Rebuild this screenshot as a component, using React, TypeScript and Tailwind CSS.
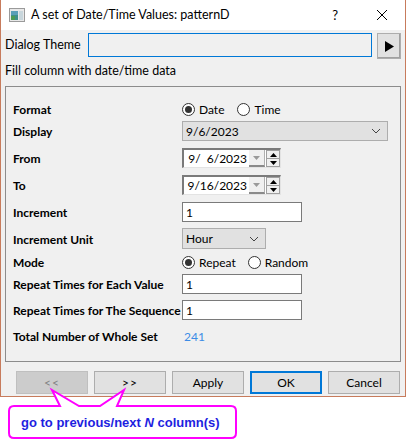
import React from "react";

function Radio({ checked, label, className = "" }: { checked?: boolean; label: string; className?: string }) {
  return (
    <div className={`flex items-center ${className}`}>
      <div className="w-[13px] h-[13px] rounded-full border border-[#333] bg-white flex items-center justify-center">
        {checked && <div className="w-[7px] h-[7px] rounded-full bg-[#333]" />}
      </div>
      <span className="ml-[4px] pt-[1px]">{label}</span>
    </div>
  );
}

function Chevron() {
  return (
    <svg width="10" height="6" viewBox="0 0 10 6" className="shrink-0">
      <polyline points="1,1 5,5 9,1" fill="none" stroke="#444" strokeWidth="1" />
    </svg>
  );
}

function Combo({ value, width }: { value: string; width: string }) {
  return (
    <div className={`${width} h-full bg-[#e1e1e1] border border-[#adadad] flex items-center pl-[3px] pr-[6px] justify-between`}>
      <span className="pt-[1px]">{value}</span>
      <Chevron />
    </div>
  );
}

function TextBox({ value }: { value: string }) {
  return (
    <div className="w-[120px] h-full bg-white border border-[#7a7a7a] flex items-center pl-[3px]">
      <span className="pt-[1px]">{value}</span>
    </div>
  );
}

function DatePicker({ value }: { value: string }) {
  return (
    <div className="w-[99px] h-full flex border-t-[2px] border-l-[2px] border-t-[#7a7a7a] border-l-[#7a7a7a] border-b border-r border-b-[#e3e3e3] border-r-[#e3e3e3] bg-white">
      <div className="flex-1 flex items-center justify-end pr-[2px] pt-[1px] whitespace-pre">{value}</div>
      <div className="w-[16px] h-full bg-[#f0f0f0] border-b-[2px] border-r border-b-[#8a8a8a] border-r-[#b0b0b0] flex items-center justify-center">
        <svg width="7" height="4" viewBox="0 0 7 4">
          <polygon points="0,0 7,0 3.5,4" fill="#9a9a9a" />
        </svg>
      </div>
      <div className="w-[14px] h-full ml-[1px] flex flex-col border border-[#a0a0a0] bg-[#f0f0f0]">
        <div className="flex-1 flex items-center justify-center border-b border-[#a0a0a0]">
          <svg width="7" height="4" viewBox="0 0 7 4">
            <polygon points="0,4 7,4 3.5,0" fill="#000" />
          </svg>
        </div>
        <div className="flex-1 flex items-center justify-center">
          <svg width="7" height="4" viewBox="0 0 7 4">
            <polygon points="0,0 7,0 3.5,4" fill="#000" />
          </svg>
        </div>
      </div>
    </div>
  );
}

function Row({ label, children, h, mt }: { label: string; children?: React.ReactNode; h: string; mt: string }) {
  return (
    <div className={`flex items-center ${h} ${mt}`}>
      <div className="w-[169px] font-bold shrink-0 whitespace-nowrap pt-[2px]">{label}</div>
      <div className="flex-1 h-full flex items-center">{children}</div>
    </div>
  );
}

function Btn({ children, variant = "normal" }: { children: React.ReactNode; variant?: "normal" | "disabled" | "default" }) {
  const cls =
    variant === "disabled"
      ? "bg-[#cccccc] border border-[#bfbfbf] text-[#838383]"
      : variant === "default"
      ? "bg-[#e1e1e1] border-2 border-[#0078d7]"
      : "bg-[#e1e1e1] border border-[#adadad]";
  return <div className={`w-[72px] h-[23px] flex items-center justify-center pt-[1px] ${cls}`}>{children}</div>;
}

export default function App() {
  return (
    <div className="w-[406px] h-[444px] bg-white relative overflow-hidden font-['Lato','Noto_Sans',sans-serif] text-[12px] text-black leading-none">
      <div className="h-[397px] border-x border-b border-[#c77b5c] flex flex-col">
        {/* Title bar */}
        <div className="h-[30px] bg-white flex items-center shrink-0">
          <svg width="16" height="14" viewBox="0 0 16 14" className="ml-[8px]">
            <rect x="0.5" y="0.5" width="15" height="13" fill="#e8e8e8" stroke="#9a9a9a" />
            <rect x="2" y="3" width="7" height="9" fill="#3f8f88" />
            <rect x="2" y="3" width="7" height="4" fill="#5a9fb8" />
            <rect x="2" y="8" width="4" height="4" fill="#4e9a52" />
            <rect x="10" y="3" width="4" height="9" fill="#c8d6dc" />
          </svg>
          <span className="ml-[6px] text-[12.5px]">A set of Date/Time Values: patternD</span>
          <span className="ml-auto mr-[38px] text-[13px]">?</span>
          <svg width="12" height="12" viewBox="0 0 12 12" className="mr-[17px]">
            <line x1="1" y1="1" x2="11" y2="11" stroke="#000" strokeWidth="1" />
            <line x1="11" y1="1" x2="1" y2="11" stroke="#000" strokeWidth="1" />
          </svg>
        </div>
        {/* Body */}
        <div className="flex-1 bg-[#f0f0f0] px-[4px] flex flex-col">
          <div className="mt-[3px] h-[26px] flex items-start">
            <div className="w-[83px] pt-[6px] text-[12.5px]">Dialog Theme</div>
            <div className="w-[284px] h-[24px] border border-[#0078d7] bg-[#f0f0f0]" />
            <div className="ml-[5px] w-[24px] h-[26px] bg-[#e1e1e1] border border-[#adadad] shadow-[inset_-1px_-1px_0_#a0a0a0] flex items-center justify-center">
              <svg width="9" height="11" viewBox="0 0 9 11">
                <polygon points="0,0 9,5.5 0,11" fill="#000" />
              </svg>
            </div>
          </div>
          <div className="mt-[3px] h-[16px] flex items-center pt-[2px] text-[12.5px]">Fill column with date/time data</div>
          <div className="mt-[8px] h-[276px] border border-[#8c8c8c] pl-[7px] pr-[13px] pt-[13px] flex flex-col">
            <Row label="Format" h="h-[18px]" mt="mt-0">
              <Radio checked label="Date" />
              <Radio label="Time" className="ml-[13px]" />
            </Row>
            <Row label="Display" h="h-[20px]" mt="mt-[3px]">
              <Combo value="9/6/2023" width="w-[206px]" />
            </Row>
            <Row label="From" h="h-[20px]" mt="mt-[7px]">
              <DatePicker value={"9/  6/2023"} />
            </Row>
            <Row label="To" h="h-[20px]" mt="mt-[7px]">
              <DatePicker value="9/16/2023" />
            </Row>
            <Row label="Increment" h="h-[20px]" mt="mt-[7px]">
              <TextBox value="1" />
            </Row>
            <Row label="Increment Unit" h="h-[21px]" mt="mt-[6px]">
              <Combo value="Hour" width="w-[84px]" />
            </Row>
            <Row label="Mode" h="h-[18px]" mt="mt-[4px]">
              <Radio checked label="Repeat" />
              <Radio label="Random" className="ml-[12px]" />
            </Row>
            <Row label="Repeat Times for Each Value" h="h-[20px]" mt="mt-[3px]">
              <TextBox value="1" />
            </Row>
            <Row label="Repeat Times for The Sequence" h="h-[20px]" mt="mt-[6px]">
              <TextBox value="1" />
            </Row>
            <Row label="Total Number of Whole Set" h="h-[18px]" mt="mt-[7px]">
              <span className="ml-[2px] pt-[2px] text-[#3c8ce6]">241</span>
            </Row>
          </div>
          <div className="mt-[9px] ml-[11px] flex gap-[6px]">
            <Btn variant="disabled"><span className="tracking-[1px]">&lt;&lt;</span></Btn>
            <Btn><span className="tracking-[1px]">&gt;&gt;</span></Btn>
            <Btn>Apply</Btn>
            <Btn variant="default">OK</Btn>
            <Btn>Cancel</Btn>
          </div>
        </div>
      </div>
      {/* Callout */}
      <svg width="406" height="444" viewBox="0 0 406 444" className="absolute left-0 top-0 pointer-events-none">
        <path
          d="M 14 406 L 60 406 L 52 390 L 79 406 L 100 406 L 124 390 L 117 406 L 231 406 Q 236 406 236 411 L 236 433 Q 236 438 231 438 L 14 438 Q 9 438 9 433 L 9 411 Q 9 406 14 406 Z"
          fill="#ffffff"
          stroke="#ff00ff"
          strokeWidth="2"
          strokeLinejoin="miter"
        />
      </svg>
      <div className="absolute left-[21px] top-[412px] h-[20px] flex items-center font-['Liberation_Sans',Arial,sans-serif] font-bold text-[13px] text-[#1e1ee0] whitespace-pre">
        go to previous/next <i>N</i> column(s)
      </div>
    </div>
  );
}
